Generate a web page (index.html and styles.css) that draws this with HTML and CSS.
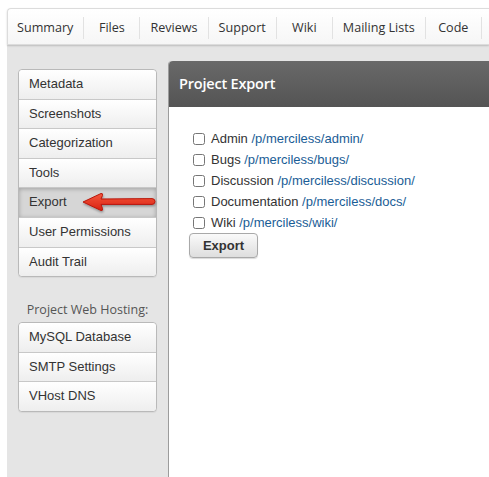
FILE: index.html
```html
<!DOCTYPE html>
<html>
<head>
<meta charset="utf-8">
<link rel="stylesheet" href="styles.css">
</head>
<body>
<div class="page">
  <nav class="topbar">
    <a class="tab">Summary</a>
    <a class="tab">Files</a>
    <a class="tab">Reviews</a>
    <a class="tab">Support</a>
    <a class="tab">Wiki</a>
    <a class="tab">Mailing Lists</a>
    <a class="tab">Code</a>
  </nav>
  <div class="layout">
    <aside class="sidebar">
      <ul class="menu">
        <li>Metadata</li>
        <li>Screenshots</li>
        <li>Categorization</li>
        <li>Tools</li>
        <li class="active">Export
          <svg class="arrow" width="80" height="26" viewBox="0 0 80 26">
            <defs>
              <linearGradient id="ag" x1="0" y1="0" x2="0" y2="1">
                <stop offset="0" stop-color="#f4583f"/>
                <stop offset="1" stop-color="#d9200f"/>
              </linearGradient>
              <filter id="sh" x="-10%" y="-30%" width="130%" height="170%">
                <feDropShadow dx="0.5" dy="1.5" stdDeviation="1.2" flood-color="#000" flood-opacity="0.35"/>
              </filter>
            </defs>
            <path d="M3 12 L21 3.5 Q23 3 22.5 5.5 L21 9 L72 8.6 Q75 8.7 75 11.5 Q75 14.3 72 14.4 L21 14.4 L22.5 18.5 Q23 21 21 20.5 Z" fill="url(#ag)" stroke="#b8180b" stroke-width="1" stroke-linejoin="round" filter="url(#sh)"/>
          </svg>
        </li>
        <li>User Permissions</li>
        <li>Audit Trail</li>
      </ul>
      <div class="label">Project Web Hosting:</div>
      <ul class="menu">
        <li>MySQL Database</li>
        <li>SMTP Settings</li>
        <li>VHost DNS</li>
      </ul>
    </aside>
    <main class="panel">
      <h2 class="panel-head">Project Export</h2>
      <div class="panel-body">
        <label class="row"><input type="checkbox"><span>Admin <a href="#">/p/merciless/admin/</a></span></label>
        <label class="row"><input type="checkbox"><span>Bugs <a href="#">/p/merciless/bugs/</a></span></label>
        <label class="row"><input type="checkbox"><span>Discussion <a href="#">/p/merciless/discussion/</a></span></label>
        <label class="row"><input type="checkbox"><span>Documentation <a href="#">/p/merciless/docs/</a></span></label>
        <label class="row"><input type="checkbox"><span>Wiki <a href="#">/p/merciless/wiki/</a></span></label>
        <button class="btn">Export</button>
      </div>
    </main>
  </div>
</div>
</body>
</html>
```
FILE: styles.css
```css
html, body {
  margin: 0;
  padding: 0;
  background: #fff;
  height: 100%;
  overflow: hidden;
}
.page {
  margin: 8px 0 0 7px;
  height: calc(100% - 8px);
  display: flex;
  flex-direction: column;
}
.topbar {
  display: flex;
  align-items: center;
  height: 32px;
  padding-top: 3px;
  flex-shrink: 0;
  border: 1px solid #dcdcdc;
  border-right: none;
  border-radius: 4px 0 0 0;
  background: linear-gradient(#ffffff, #f6f6f6);
  box-shadow: 0 1px 2px rgba(0,0,0,0.18);
  position: relative;
  z-index: 1;
  font-family: "Open Sans", "DejaVu Sans", sans-serif;
  font-size: 12.6px;
  color: #333;
  white-space: nowrap;
  overflow: hidden;
}
.tab {
  flex-shrink: 0;
  min-width: 35px;
  padding: 0 10px;
  text-align: center;
  border-right: 1px solid #e2e2e2;
  line-height: 22px;
}
.tab:first-child { padding-left: 9px; }
.layout {
  flex: 1;
  display: flex;
  background: #e5e5e5;
}
.sidebar {
  width: 139px;
  padding: 24px 11px 0 11px;
  flex-shrink: 0;
}
.menu {
  list-style: none;
  margin: 0;
  padding: 0;
  border: 1px solid #b9b9b9;
  border-radius: 4px;
  background: #fff;
  font-family: "Liberation Sans", Arial, sans-serif;
  font-size: 13px;
  color: #333;
  box-shadow: 0 1px 1px rgba(0,0,0,0.06);
}
.menu li {
  height: 28.6px;
  line-height: 28.6px;
  padding-left: 10px;
  border-top: 1px solid #c8c8c8;
  background: linear-gradient(#ffffff, #eeeeee);
  position: relative;
}
.menu li:first-child {
  border-top: none;
  border-radius: 4px 4px 0 0;
}
.menu li:last-child { border-radius: 0 0 4px 4px; }
.menu li.active {
  background: #d6d6d6;
  box-shadow: inset 0 1px 4px rgba(0,0,0,0.25);
}
.arrow {
  position: absolute;
  left: 61px;
  top: 2px;
}
.label {
  margin: 24px 0 4px;
  text-align: center;
  font-family: "Open Sans", "DejaVu Sans", sans-serif;
  font-size: 12.5px;
  color: #555;
}
.panel {
  flex: 1;
  margin-top: 16px;
  background: #fff;
  border-left: 1px solid #9c9c9c;
  border-radius: 4px 0 0 0;
}
.panel-head {
  margin: 0;
  height: 46px;
  line-height: 46px;
  padding-left: 10px;
  border-radius: 4px 0 0 0;
  background: linear-gradient(#696969, #545454);
  color: #fff;
  font-family: "Open Sans", "DejaVu Sans", sans-serif;
  font-weight: 600;
  font-size: 14.5px;
  letter-spacing: -0.2px;
}
.panel-body {
  padding: 21px 0 0 20px;
  font-family: "Liberation Sans", Arial, sans-serif;
  font-size: 13px;
  color: #333;
}
.row {
  display: flex;
  align-items: center;
  height: 21px;
}
.row input {
  margin: 0 6px 0 4px;
  width: 12px;
  height: 12px;
}
.row a {
  color: #1a5d96;
  text-decoration: none;
}
.btn {
  margin-top: 0;
  width: 69px;
  height: 25px;
  border: 1px solid #a9a9a9;
  border-radius: 4px;
  background: linear-gradient(#fafafa, #dedede);
  font-family: "Liberation Sans", Arial, sans-serif;
  font-weight: bold;
  font-size: 13px;
  color: #333;
  box-shadow: 0 1px 1px rgba(0,0,0,0.15);
  padding: 0;
}
```
